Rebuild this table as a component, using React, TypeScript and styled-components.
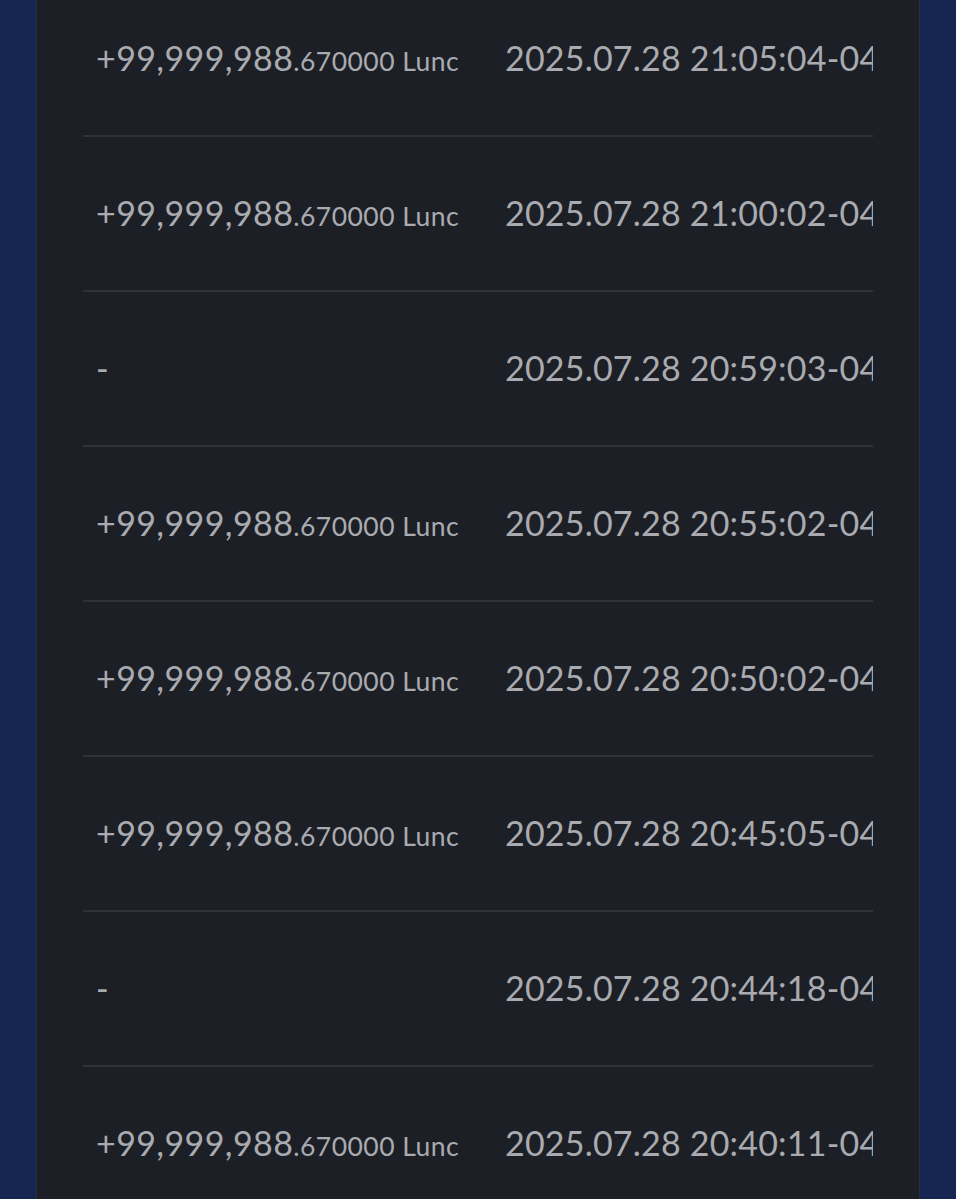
import React from "react";
import styled, { createGlobalStyle } from "styled-components";

const GlobalStyle = createGlobalStyle`
  html, body {
    margin: 0;
    padding: 0;
    background: #172651;
    overflow: hidden;
  }
`;

// Styled Components
const Page = styled.div`
  height: 1199px;
  background: #172651;
  display: flex;
  font-family: Lato, "Liberation Sans", sans-serif;
  overflow: hidden;
`;

const Panel = styled.div`
  margin-left: 36px;
  width: 884px;
  background: #1c1f26;
  border-left: 1px solid #2b2f37;
  border-right: 1px solid #2b2f37;
  padding: 0 46px;
  box-sizing: border-box;
  overflow: hidden;
`;

const List = styled.ul`
  list-style: none;
  margin: -18px 0 0;
  padding: 0;
`;

const Row = styled.li`
  height: 155px;
  box-sizing: border-box;
  border-bottom: 2px solid #2f3239;
  display: grid;
  grid-template-columns: 409px 1fr;
  align-items: center;
  padding: 0 0 3px 13px;
  overflow: hidden;
  color: #a9abb0;
  white-space: nowrap;
`;

const Amount = styled.div`
  display: flex;
  align-items: baseline;
`;

const Whole = styled.span`
  font-size: 34px;
  letter-spacing: 0.4px;
`;

const Fraction = styled.span`
  font-size: 26.5px;
  letter-spacing: 0.45px;
`;

const DateText = styled.div`
  font-size: 34px;
  letter-spacing: 0.2px;
  overflow: hidden;
`;

type Record = { amount: string | null; time: string };

const records: Record[] = [
  { amount: "99,999,988.670000", time: "2025.07.28 21:05:04-04:00" },
  { amount: "99,999,988.670000", time: "2025.07.28 21:00:02-04:00" },
  { amount: null, time: "2025.07.28 20:59:03-04:00" },
  { amount: "99,999,988.670000", time: "2025.07.28 20:55:02-04:00" },
  { amount: "99,999,988.670000", time: "2025.07.28 20:50:02-04:00" },
  { amount: "99,999,988.670000", time: "2025.07.28 20:45:05-04:00" },
  { amount: null, time: "2025.07.28 20:44:18-04:00" },
  { amount: "99,999,988.670000", time: "2025.07.28 20:40:11-04:00" },
];

const AmountCell = ({ value }: { value: string | null }) => {
  if (!value) return <Amount><Whole>-</Whole></Amount>;
  const [whole, frac] = value.split(".");
  return (
    <Amount>
      <Whole>+{whole}</Whole>
      <Fraction>.{frac} Lunc</Fraction>
    </Amount>
  );
};

export default function App() {
  return (
    <>
      <GlobalStyle />
      <Page>
        <Panel>
          <List>
            {records.map((r, i) => (
              <Row key={i}>
                <AmountCell value={r.amount} />
                <DateText>{r.time}</DateText>
              </Row>
            ))}
          </List>
        </Panel>
      </Page>
    </>
  );
}
